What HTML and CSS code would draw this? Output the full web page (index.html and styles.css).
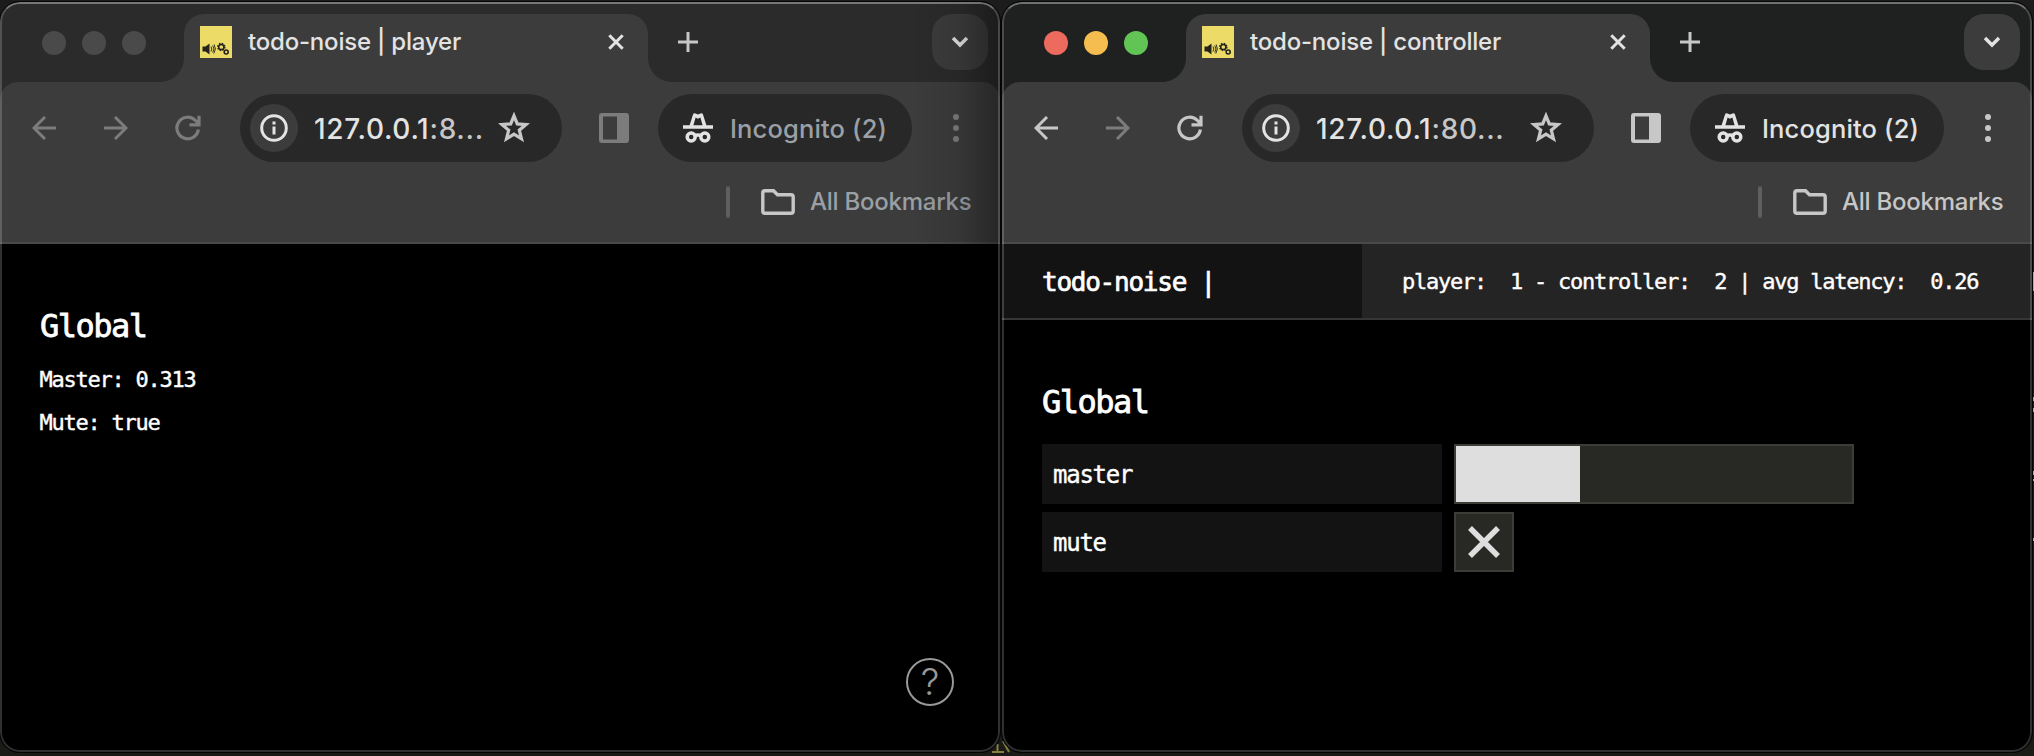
FILE: index.html
```
<!DOCTYPE html>
<html lang="en">
<head>
<meta charset="utf-8">
<title>todo-noise</title>
<link rel="stylesheet" href="styles.css">
</head>
<body>
<svg class="defs" width="0" height="0">
  <symbol id="favicon" viewBox="0 0 32 32">
    <rect width="32" height="32" fill="#ecdb66"/>
    <path d="M2.500 20.500h3l4-3v11l-4-3h-3z" fill="#23231c"/>
    <path d="M11 20.500q1.600 2.500 0 5M12.700 19.500q2.600 3.500 0 7M14.200 18.500q2.600 4.500-.4 9" fill="none" stroke="#23231c" stroke-width=".9"/>
    <circle cx="21.300" cy="21" r="2.600" fill="none" stroke="#23231c" stroke-width="1.500"/>
    <circle cx="21.300" cy="21" r="3.600" fill="none" stroke="#23231c" stroke-width="1.300" stroke-dasharray="1.500 1.330"/>
    <circle cx="26.200" cy="26" r="2" fill="none" stroke="#23231c" stroke-width="1.600"/>
  </symbol>
  <symbol id="close" viewBox="0 0 24 24"><path d="M5.300 5.300l13.400 13.400M18.700 5.300L5.300 18.700" class="line"/></symbol>
  <symbol id="plus" viewBox="0 0 24 24"><path d="M12 2v20M2 12h20" class="line"/></symbol>
  <symbol id="chevron" viewBox="0 0 24 24"><path d="M5 8l7 7 7-7" class="line"/></symbol>
  <symbol id="back" viewBox="0 0 24 24"><path d="M24 12H2M13 1L2 12l11 11" class="line"/></symbol>
  <symbol id="forward" viewBox="0 0 24 24"><path d="M0 12h22M11 1l11 11-11 11" class="line"/></symbol>
  <symbol id="reload" viewBox="0 0 26 26"><path d="M23.400 14.500A10.800 10.800 0 1 1 20.500 5.500L23.500 8.500M24 .8v9H14.500" class="line"/></symbol>
  <symbol id="info" viewBox="0 0 28 28"><circle cx="14" cy="14" r="12.300" class="line"/><path d="M14 12.500v8M14 7.500v3" class="line"/></symbol>
  <symbol id="star" viewBox="0 0 32 32"><path d="M16 3.800l3.300 8.100 8.700.7-6.700 5.600 2.200 8.700-7.500-4.700-7.500 4.700 2.200-8.700-6.700-5.600 8.700-.7z" class="line"/></symbol>
  <symbol id="panel" viewBox="0 0 30 30"><rect width="30" height="30" rx="3" fill="currentColor"/><rect x="4" y="3.500" width="14" height="23" fill="#3c3c3c"/></symbol>
  <symbol id="incognito" viewBox="0 0 30 30">
    <path d="M0 12.200h6.600L10 1.500Q10.700 -.2 12.500 .4L15 1.500 17.500 .4Q19.300 -.2 20 1.500L23.400 12.200H30V15.800H0z" fill="currentColor"/>
    <path d="M12.600 4.600L10.400 12.200h9.200L17.400 4.600 15 5.700z" fill="#282828"/>
    <circle cx="8.200" cy="24" r="4" class="line"/><circle cx="21.800" cy="24" r="4" class="line"/><path d="M11.500 22.800q3.500-1.500 7 0" class="line"/>
  </symbol>
  <symbol id="folder" viewBox="0 0 34 26"><path d="M4 1.700h8.500l4 4H30q2.200 0 2.200 2.200v14.200q0 2.200-2.200 2.200H4q-2.200 0-2.200-2.200V3.900Q1.800 1.700 4 1.700z" class="line"/></symbol>
</svg>
<div class="desktop">
  <svg class="behind" viewBox="0 0 50 16"><path d="M12 12h12M17.500 4v8M23 1l6 11" fill="none" stroke="#85803d" stroke-width="2"/></svg>
  <i class="speck s1"></i><i class="speck s2"></i><i class="speck s3"></i><i class="speck s4"></i><i class="speck s5"></i><i class="speck s6"></i>
  <section class="window player">
    <div class="strip">
      <div class="lights"><i></i><i></i><i></i></div>
      <div class="tab">
        <svg class="fav"><use href="#favicon"/></svg>
        <span class="title">todo-noise | player</span>
        <svg class="ic close"><use href="#close"/></svg>
      </div>
      <svg class="ic plus"><use href="#plus"/></svg>
      <div class="menu"><svg class="ic"><use href="#chevron"/></svg></div>
    </div>
    <div class="toolbar">
      <svg class="ic nav"><use href="#back"/></svg>
      <svg class="ic nav"><use href="#forward"/></svg>
      <svg class="ic nav reload"><use href="#reload"/></svg>
      <div class="address">
        <div class="site"><svg><use href="#info"/></svg></div>
        <span class="url">127.0.0.1<em>:8...</em></span>
        <svg class="star"><use href="#star"/></svg>
      </div>
      <svg class="panel"><use href="#panel"/></svg>
      <div class="profile"><svg><use href="#incognito"/></svg><span>Incognito (2)</span></div>
      <div class="dots"><i></i><i></i><i></i></div>
    </div>
    <div class="bookmarks"><i class="sep"></i><svg><use href="#folder"/></svg><span>All Bookmarks</span></div>
    <main class="page">
      <h1>Global</h1>
      <p>Master: 0.313</p>
      <p>Mute: true</p>
      <div class="help">?</div>
    </main>
  </section>
  <section class="window controller">
    <div class="strip">
      <div class="lights"><i></i><i></i><i></i></div>
      <div class="tab">
        <svg class="fav"><use href="#favicon"/></svg>
        <span class="title">todo-noise | controller</span>
        <svg class="ic close"><use href="#close"/></svg>
      </div>
      <svg class="ic plus"><use href="#plus"/></svg>
      <div class="menu"><svg class="ic"><use href="#chevron"/></svg></div>
    </div>
    <div class="toolbar">
      <svg class="ic nav"><use href="#back"/></svg>
      <svg class="ic nav off"><use href="#forward"/></svg>
      <svg class="ic nav reload"><use href="#reload"/></svg>
      <div class="address">
        <div class="site"><svg><use href="#info"/></svg></div>
        <span class="url">127.0.0.1<em>:80...</em></span>
        <svg class="star"><use href="#star"/></svg>
      </div>
      <svg class="panel"><use href="#panel"/></svg>
      <div class="profile"><svg><use href="#incognito"/></svg><span>Incognito (2)</span></div>
      <div class="dots"><i></i><i></i><i></i></div>
    </div>
    <div class="bookmarks"><i class="sep"></i><svg><use href="#folder"/></svg><span>All Bookmarks</span></div>
    <header class="app-bar">
      <div class="brand">todo-noise |</div>
      <div class="status">player:  1 - controller:  2 | avg latency:  0.26</div>
    </header>
    <main class="page">
      <h1>Global</h1>
      <div class="row"><label>master</label><div class="slider"><div class="fill" style="width:31.3%"></div></div></div>
      <div class="row"><label>mute</label><div class="toggle"><svg viewBox="0 0 32 32"><path d="M2 2l28 28M30 2L2 30"/></svg></div></div>
    </main>
  </section>
</div>
</body>
</html>
```
FILE: styles.css
```
* { box-sizing: border-box; }
body { margin: 0; background: #000; }
.defs { position: absolute; }
.line { fill: none; stroke: currentColor; }
.desktop {
  position: relative; display: flex; gap: 2px; width: 2034px; height: 756px;
  padding: 2px 0 4px; overflow: hidden;
  background: linear-gradient(#1c1c1c 0 50%, #1a1b17 50%);
}

/* Fragments of the windows lying underneath */
.behind { position: absolute; left: 980px; top: 740px; width: 50px; height: 16px; }
.speck { position: absolute; right: 0; width: 1px; height: 4px; background: #aaa; z-index: 2; }
.s1 { top: 272px; height: 19px; }
.s2 { top: 397px; }
.s3 { top: 408px; }
.s4 { top: 471px; }
.s5 { top: 479px; height: 2px; }
.s6 { top: 538px; height: 3px; }

.window {
  position: relative; display: flex; flex-direction: column;
  height: 750px; border-radius: 20px; overflow: hidden;
  background: #000; font-family: Inter, "Liberation Sans", sans-serif;
  box-shadow: 0 0 0 1px #050505; flex: none;
}
.window::after {
  content: ""; position: absolute; z-index: 3; inset: 0; border-radius: 20px;
  border: 2px solid rgba(255, 255, 255, .19); border-top-color: rgba(255, 255, 255, .36);
  pointer-events: none;
}
.player { width: 1000px; --strip: #2b2b2b; --icon: #7c7c7c; --label: #9aa0a6; --book: #9aa0a6; --dot: #7c7c7c; }
.controller { width: 1030px; --strip: #1f2120; --icon: #c7c7c7; --label: #e3e3e3; --book: #c7c7c7; --dot: #c7c7c7; }
.player::before {
  content: ""; position: absolute; z-index: 2; top: 0; right: 0; width: 90px; height: 242px;
  background: linear-gradient(90deg, transparent, rgba(0, 0, 0, .1) 55%, rgba(0, 0, 0, .36));
}

.strip {
  position: relative; z-index: 1; display: flex; height: 80px; flex: none;
  background: var(--strip); padding: 12px 12px 0 42px; color: #e3e3e3;
}
.lights { display: flex; gap: 16px; width: 142px; padding-top: 17px; }
.lights i { width: 24px; height: 24px; border-radius: 50%; background: #4a4a4a; }
.controller .lights i:nth-child(1) { background: #ed6a5f; }
.controller .lights i:nth-child(2) { background: #f5bd4f; }
.controller .lights i:nth-child(3) { background: #61c454; }
.tab {
  position: relative; display: flex; align-items: flex-start; width: 464px; height: 68px;
  padding: 12px 20px 0 16px; border-radius: 20px 20px 0 0; background: #3c3c3c;
}
.tab::before, .tab::after {
  content: ""; position: absolute; bottom: 0; width: 24px; height: 24px;
}
.tab::before { left: -24px; background: radial-gradient(circle at 0 0, transparent 23.500px, #3c3c3c 24.500px); }
.tab::after { right: -24px; background: radial-gradient(circle at 100% 0, transparent 23.500px, #3c3c3c 24.500px); }
.fav { width: 32px; height: 32px; margin-right: 16px; }
.title { font-size: 24px; line-height: 32px; font-weight: 450; letter-spacing: -.200px; white-space: nowrap; flex: 1; }
.ic { width: 24px; height: 24px; stroke-width: 3; flex: none; }
.close { margin-top: 4px; }
.plus { margin: 16px 0 0 28px; color: #c7c7c7; }
.menu {
  display: flex; justify-content: center; align-items: center; margin-left: auto;
  width: 56px; height: 56px; border-radius: 20px; background: #3c3c3c;
}
.menu .ic { stroke-width: 3.500; }

.toolbar {
  position: relative; display: flex; align-items: center; height: 92px; flex: none; background: #3c3c3c;
  padding: 0 41px 0 32px; color: var(--icon); border-radius: 18px 18px 0 0;
  box-shadow: 0 -20px 0 0 var(--strip);
}
.nav { margin-right: 48px; }
.reload { width: 26px; height: 26px; margin: 0 39px 0 -1px; stroke-width: 3.200; }
.off { color: #7c7c7c; }
.address {
  display: flex; align-items: center; flex: 1; height: 68px; border-radius: 34px;
  background: #282828; padding: 0 32px 0 10px; margin-right: 37px;
}
.site {
  display: flex; align-items: center; justify-content: center;
  width: 48px; height: 48px; border-radius: 50%; background: #3c3c3c; color: #e3e3e3;
}
.site svg { width: 28px; height: 28px; stroke-width: 3; }
.url {
  margin-left: 16px; padding-top: 1px; flex: 1; font-size: 28px; font-weight: 450; letter-spacing: .700px;
  color: #e3e3e3; white-space: nowrap;
}
.url em { font-style: normal; color: #c7c7c7; }
.star { width: 32px; height: 32px; stroke-width: 3.200; color: #c7c7c7; }
.panel { width: 30px; height: 30px; margin-right: 29px; }
.profile {
  display: flex; align-items: center; width: 254px; height: 68px; border-radius: 34px;
  padding-left: 25px; background: #282828; color: #e3e3e3; margin-right: 41px;
}
.profile svg { width: 30px; height: 30px; margin-right: 17px; stroke-width: 3.500; }
.profile span { font-size: 25.500px; font-weight: 450; letter-spacing: .150px; color: var(--label); white-space: nowrap; }
.dots { display: flex; flex-direction: column; gap: 5px; width: 6px; }
.dots i { width: 6px; height: 6px; border-radius: 50%; background: var(--dot); }

.bookmarks {
  display: flex; align-items: center; justify-content: flex-end; height: 70px; flex: none;
  background: #3c3c3c; border-bottom: 2px solid #4a4a4a; padding: 0 30px 12px 0;
}
.sep { width: 4px; height: 32px; border-radius: 2px; background: #5f5f5f; margin-right: 31px; }
.bookmarks svg { width: 34px; height: 26px; margin-right: 15px; color: #c7c7c7; stroke-width: 3.400; }
.bookmarks span {
  font-size: 24px; font-weight: 450; width: 160px; letter-spacing: -.250px; padding-bottom: 2px;
  color: var(--book); white-space: nowrap;
}

.page, .app-bar {
  font-family: "DejaVu Sans Mono", monospace; color: #fff;
  -webkit-text-stroke: .400px #fff;
}
.page { position: relative; flex: 1; padding: 60px 40px 0; }
h1 {
  margin: 0; font-size: 32px; line-height: 44px; letter-spacing: -1.500px;
  font-weight: 400; -webkit-text-stroke-width: .800px;
}
p { margin: 0 0 0 -.500px; font-size: 22px; line-height: 43px; letter-spacing: -1.240px; }
h1 + p { margin-top: 10px; }
.help {
  position: absolute; right: 46px; bottom: 46px; width: 48px; height: 48px;
  border: 2.500px solid #999; border-radius: 50%; color: #999; -webkit-text-stroke: 0;
  font: 300 37px/44px Inter, sans-serif; text-align: center;
}
.app-bar { display: flex; height: 76px; flex: none; border-bottom: 2px solid #363636; white-space: pre; }
.brand {
  width: 360px; padding-left: 40px; background: #131313;
  font-size: 26px; line-height: 76px; letter-spacing: -1.250px; -webkit-text-stroke-width: .700px;
}
.status {
  flex: 1; background: #242424; padding-left: 40px;
  font-size: 22px; line-height: 76px; letter-spacing: -1.240px;
}
.row { display: flex; gap: 12px; height: 60px; margin-bottom: 8px; }
h1 + .row { margin-top: 20px; }
.row label {
  width: 400px; padding-left: 11px; background: #131313;
  font-size: 24px; line-height: 62px; letter-spacing: -1.250px;
}
.slider { width: 400px; border: 2px solid #3c3d37; background: #282924; }
.fill { height: 100%; background: #dedede; }
.toggle {
  display: flex; align-items: center; justify-content: center;
  width: 60px; border: 2px solid #3c3d37; background: #282924;
}
.toggle svg { width: 32px; height: 32px; stroke: #dedede; stroke-width: 5.500; }
```
